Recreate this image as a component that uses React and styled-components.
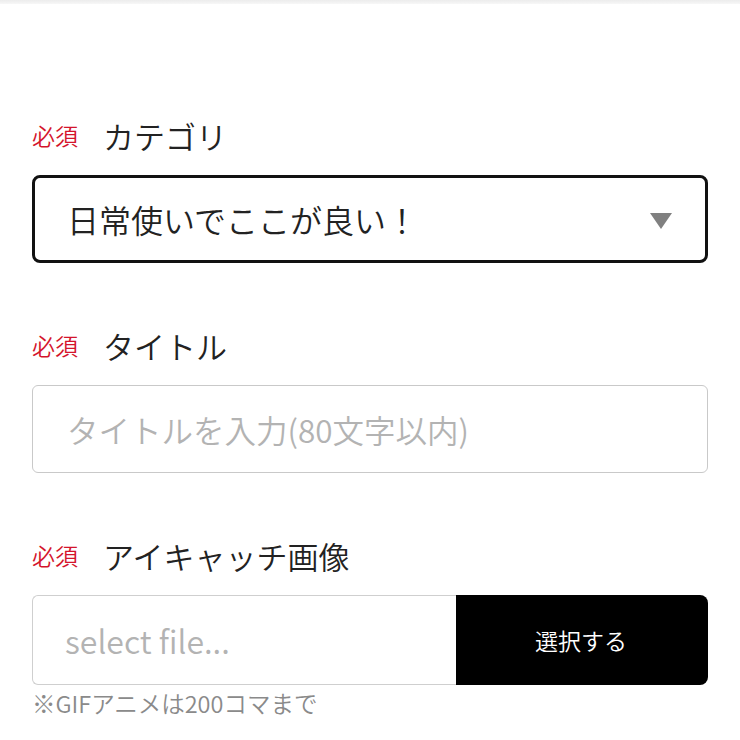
import React from "react";
import styled, { createGlobalStyle } from "styled-components";

const Global = createGlobalStyle`
  html, body { margin: 0; padding: 0; background: #fff; }
  body { font-family: "Noto Sans CJK JP", "Noto Sans", sans-serif; }
  * { box-sizing: border-box; }
`;

const TopBar = styled.div`
  height: 4px;
  background: linear-gradient(#ececec, #f7f7f7);
`;

const Form = styled.form`
  padding: 111px 32px 0 32px;
  display: flex;
  flex-direction: column;
`;

const Field = styled.div`
  display: flex;
  flex-direction: column;
  margin-bottom: ${(p) => (p.$last ? "0" : "62px")};
`;

const LabelRow = styled.div`
  display: flex;
  align-items: center;
  height: 40px;
  margin-bottom: 20px;
`;

const Required = styled.span`
  font-size: 23px;
  line-height: 1;
  color: #d4142c;
  margin-right: 25px;
  font-weight: 350;
`;

const Title = styled.span`
  font-size: 31px;
  line-height: 1;
  color: #222;
  font-weight: 350;
`;

const SelectBox = styled.div`
  height: 88px;
  border: 3px solid #111;
  border-radius: 8px;
  display: flex;
  align-items: center;
  justify-content: space-between;
  padding: 0 33px 0 32px;
  font-size: 32px;
  font-weight: 350;
  color: #222;
`;

const Caret = styled.span`
  width: 0;
  height: 0;
  border-left: 11px solid transparent;
  border-right: 11px solid transparent;
  border-top: 16px solid #808080;
  margin-top: 3px;
`;

const TextInput = styled.input`
  height: 88px;
  width: 100%;
  border: 1px solid #c9c9c9;
  border-radius: 6px;
  padding: 0 0 0 34px;
  font-family: inherit;
  font-size: 31.5px;
  font-weight: 350;
  color: #222;
  outline: none;
  &::placeholder { color: #b3b3b3; }
`;

const FileRow = styled.div`
  display: flex;
  height: 90px;
`;

const FileName = styled.div`
  flex: 1;
  border: 1px solid #cfcfcf;
  border-right: none;
  border-radius: 6px 0 0 6px;
  display: flex;
  align-items: center;
  padding-left: 32px;
  font-size: 32px;
  font-weight: 350;
  color: #b3b3b3;
`;

const FileButton = styled.button`
  width: 252px;
  border: none;
  background: #000;
  color: #fff;
  border-radius: 0 8px 8px 0;
  font-family: inherit;
  font-size: 23px;
  font-weight: 350;
  padding: 0;
  display: flex;
  align-items: center;
  justify-content: center;
  padding-right: 2px;
`;

const Note = styled.p`
  margin: 6px 0 0 0;
  font-size: 23.5px;
  font-weight: 350;
  line-height: 24px;
  color: #8a8a8a;
`;

export default function App() {
  return (
    <>
      <Global />
      <TopBar />
      <Form onSubmit={(e) => e.preventDefault()}>
        <Field>
          <LabelRow>
            <Required>必須</Required>
            <Title>カテゴリ</Title>
          </LabelRow>
          <SelectBox>
            <span>日常使いでここが良い！</span>
            <Caret />
          </SelectBox>
        </Field>
        <Field>
          <LabelRow>
            <Required>必須</Required>
            <Title>タイトル</Title>
          </LabelRow>
          <TextInput placeholder="タイトルを入力(80文字以内)" />
        </Field>
        <Field $last>
          <LabelRow>
            <Required>必須</Required>
            <Title>アイキャッチ画像</Title>
          </LabelRow>
          <FileRow>
            <FileName>select file...</FileName>
            <FileButton type="button">選択する</FileButton>
          </FileRow>
          <Note>※GIFアニメは200コマまで</Note>
        </Field>
      </Form>
    </>
  );
}
